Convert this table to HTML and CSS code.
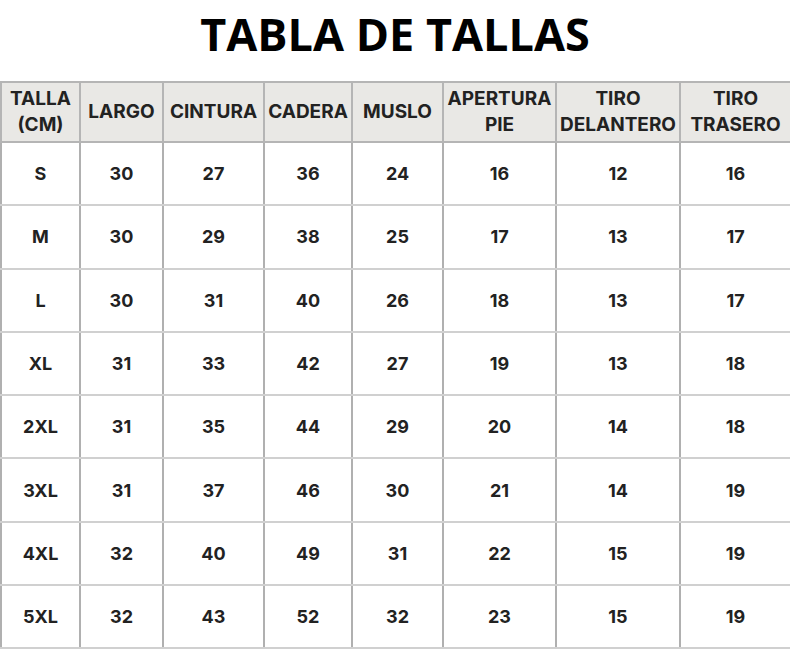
FILE: index.html
```html
<!DOCTYPE html>
<html lang="es">
<head>
<meta charset="utf-8">
<title>Tabla de tallas</title>
<link rel="stylesheet" href="styles.css">
</head>
<body>
<h1 class="title">TABLA DE TALLAS</h1>
<table class="sizes">
  <colgroup>
    <col class="c1"><col class="c2"><col class="c3"><col class="c4"><col class="c5"><col class="c6"><col class="c7"><col class="c8">
  </colgroup>
  <thead>
    <tr><th>TALLA<br>(CM)</th><th>LARGO</th><th>CINTURA</th><th>CADERA</th><th>MUSLO</th><th>APERTURA<br>PIE</th><th>TIRO<br>DELANTERO</th><th>TIRO<br>TRASERO</th></tr>
  </thead>
  <tbody>
    <tr><td>S</td><td>30</td><td>27</td><td>36</td><td>24</td><td>16</td><td>12</td><td>16</td></tr>
    <tr><td>M</td><td>30</td><td>29</td><td>38</td><td>25</td><td>17</td><td>13</td><td>17</td></tr>
    <tr><td>L</td><td>30</td><td>31</td><td>40</td><td>26</td><td>18</td><td>13</td><td>17</td></tr>
    <tr><td>XL</td><td>31</td><td>33</td><td>42</td><td>27</td><td>19</td><td>13</td><td>18</td></tr>
    <tr><td>2XL</td><td>31</td><td>35</td><td>44</td><td>29</td><td>20</td><td>14</td><td>18</td></tr>
    <tr><td>3XL</td><td>31</td><td>37</td><td>46</td><td>30</td><td>21</td><td>14</td><td>19</td></tr>
    <tr><td>4XL</td><td>32</td><td>40</td><td>49</td><td>31</td><td>22</td><td>15</td><td>19</td></tr>
    <tr><td>5XL</td><td>32</td><td>43</td><td>52</td><td>32</td><td>23</td><td>15</td><td>19</td></tr>
  </tbody>
</table>
</body>
</html>
```
FILE: styles.css
```css
html, body {
  margin: 0;
  padding: 0;
  background: #ffffff;
}
.title {
  margin: 0;
  height: 81px;
  box-sizing: border-box;
  padding-top: 6px;
  text-align: center;
  font-family: "Open Sans", sans-serif;
  font-weight: 700;
  font-size: 45px;
  line-height: 56px;
  color: #000;
}
.sizes {
  width: 790px;
  border-collapse: collapse;
  table-layout: fixed;
  font-family: Inter, "Liberation Sans", sans-serif;
  font-weight: 700;
  font-size: 18px;
  color: #222;
  text-align: center;
}
.c1 { width: 79px; }
.c2 { width: 83px; }
.c3 { width: 101px; }
.c4 { width: 88px; }
.c5 { width: 91px; }
.c6 { width: 113px; }
.c7 { width: 124px; }
.c8 { width: 111px; }
.sizes th {
  background: #e9e8e5;
  border: 2px solid #b5b5b5;
  height: 58px;
  padding: 0;
  font-size: 19px;
  line-height: 26px;
  font-weight: 700;
  white-space: nowrap;
}
.sizes td {
  border-left: 2px solid #b0b0b0;
  border-right: 2px solid #b0b0b0;
  border-top: 2px solid #d0d0d0;
  border-bottom: 2px solid #d0d0d0;
  height: 61.3px;
  padding: 0;
}
```
